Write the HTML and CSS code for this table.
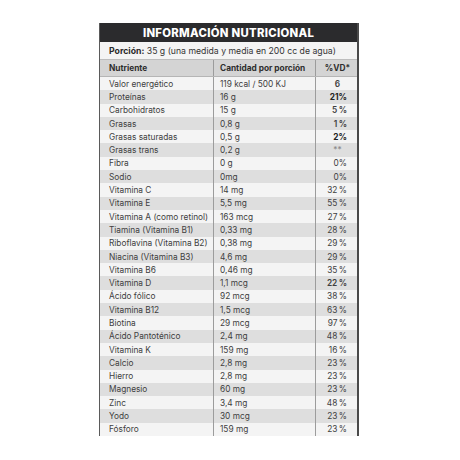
FILE: index.html
```html
<!DOCTYPE html>
<html lang="es">
<head>
<meta charset="utf-8">
<link rel="stylesheet" href="styles.css">
</head>
<body>
<div class="card">
  <div class="title">INFORMACIÓN NUTRICIONAL</div>
  <div class="portion"><span><b>Porción:</b> 35 g (una medida y media en 200 cc de agua)</span></div>
  <div class="row head"><div class="c1">Nutriente</div><div class="c2">Cantidad por porción</div><div class="c3 mid">%VD*</div></div>
  <div class="row"><div class="c1">Valor energético</div><div class="c2">119 kcal / 500 KJ</div><div class="c3 mid semi">6</div></div>
  <div class="row alt"><div class="c1">Proteínas</div><div class="c2">16 g</div><div class="c3 bold">21%</div></div>
  <div class="row"><div class="c1">Carbohidratos</div><div class="c2">15 g</div><div class="c3 semi">5&thinsp;%</div></div>
  <div class="row alt"><div class="c1">Grasas</div><div class="c2">0,8 g</div><div class="c3 semi">1&thinsp;%</div></div>
  <div class="row"><div class="c1">Grasas saturadas</div><div class="c2">0,5 g</div><div class="c3 bold">2%</div></div>
  <div class="row alt"><div class="c1">Grasas trans</div><div class="c2">0,2 g</div><div class="c3 mid faint">**</div></div>
  <div class="row"><div class="c1">Fibra</div><div class="c2">0 g</div><div class="c3">0%</div></div>
  <div class="row alt"><div class="c1">Sodio</div><div class="c2">0mg</div><div class="c3">0%</div></div>
  <div class="row"><div class="c1">Vitamina C</div><div class="c2">14 mg</div><div class="c3">32&thinsp;%</div></div>
  <div class="row alt"><div class="c1">Vitamina E</div><div class="c2">5,5 mg</div><div class="c3">55&thinsp;%</div></div>
  <div class="row"><div class="c1">Vitamina A (como retinol)</div><div class="c2">163 mcg</div><div class="c3">27&thinsp;%</div></div>
  <div class="row alt"><div class="c1">Tiamina (Vitamina B1)</div><div class="c2">0,33 mg</div><div class="c3">28&thinsp;%</div></div>
  <div class="row"><div class="c1">Riboflavina (Vitamina B2)</div><div class="c2">0,38 mg</div><div class="c3">29&thinsp;%</div></div>
  <div class="row alt"><div class="c1">Niacina (Vitamina B3)</div><div class="c2">4,6 mg</div><div class="c3">29&thinsp;%</div></div>
  <div class="row"><div class="c1">Vitamina B6</div><div class="c2">0,46 mg</div><div class="c3">35&thinsp;%</div></div>
  <div class="row alt"><div class="c1">Vitamina D</div><div class="c2">1,1 mcg</div><div class="c3 semi">22&thinsp;%</div></div>
  <div class="row"><div class="c1">Ácido fólico</div><div class="c2">92 mcg</div><div class="c3">38&thinsp;%</div></div>
  <div class="row alt"><div class="c1">Vitamina B12</div><div class="c2">1,5 mcg</div><div class="c3">63&thinsp;%</div></div>
  <div class="row"><div class="c1">Biotina</div><div class="c2">29 mcg</div><div class="c3">97&thinsp;%</div></div>
  <div class="row alt"><div class="c1">Ácido Pantoténico</div><div class="c2">2,4 mg</div><div class="c3">48&thinsp;%</div></div>
  <div class="row"><div class="c1">Vitamina K</div><div class="c2">159 mg</div><div class="c3">16&thinsp;%</div></div>
  <div class="row alt"><div class="c1">Calcio</div><div class="c2">2,8 mg</div><div class="c3">23&thinsp;%</div></div>
  <div class="row"><div class="c1">Hierro</div><div class="c2">2,8 mg</div><div class="c3">23&thinsp;%</div></div>
  <div class="row alt"><div class="c1">Magnesio</div><div class="c2">60 mg</div><div class="c3">23&thinsp;%</div></div>
  <div class="row"><div class="c1">Zinc</div><div class="c2">3,4 mg</div><div class="c3">48&thinsp;%</div></div>
  <div class="row alt"><div class="c1">Yodo</div><div class="c2">30 mcg</div><div class="c3">23&thinsp;%</div></div>
  <div class="row"><div class="c1">Fósforo</div><div class="c2">159 mg</div><div class="c3">23&thinsp;%</div></div>
</div>
</body>
</html>
```
FILE: styles.css
```css
html, body {
  margin: 0;
  padding: 0;
  background: #ffffff;
}
body {
  padding: 23px 0 0 99px;
  font-family: Inter, "Liberation Sans", sans-serif;
  color: #404040;
}
.card {
  width: 260px;
  box-sizing: border-box;
  border-left: 1.5px solid #5a5a5a;
  border-right: 2px solid #4a4a4a;
  display: flex;
  flex-direction: column;
}
.title {
  height: 19px;
  background: #2b2b2d;
  color: #ffffff;
  font-weight: 800;
  font-size: 11.3px;
  letter-spacing: 0.3px;
  display: flex;
  align-items: center;
  justify-content: center;
}
.portion {
  height: 18px;
  background: #f4f4f4;
  font-size: 8.7px;
  display: flex;
  align-items: center;
  padding-left: 9px;
  color: #333;
  border-bottom: 1px solid #bdbdbd;
  box-sizing: border-box;
  white-space: nowrap;
}
.portion b { font-weight: 700; color: #2a2a2a; }
.row {
  display: grid;
  grid-template-columns: 113px 102px 1fr;
  height: 13.3px;
  background: #f4f4f4;
  font-size: 8.3px;
}
.row.alt { background: #dedede; }
.row.head {
  height: 17px;
  background: #d4d4d4;
  font-weight: 700;
  font-size: 8.3px;
  color: #2e2e2e;
  border-bottom: 1px solid #b5b5b5;
  box-sizing: border-box;
}
.row > div {
  display: flex;
  align-items: center;
  white-space: nowrap;
}
.c1 { padding-left: 9px; }
.c2 {
  padding-left: 6px;
  border-left: 1px solid #9c9c9c;
}
.c3 {
  border-left: 1px solid #9c9c9c;
  justify-content: flex-end;
  padding-right: 10px;
}
.c3.mid { justify-content: center; padding-right: 0; padding-left: 2px; }
.semi { font-weight: 600; }
.bold { font-weight: 700; color: #222; }
.faint { color: #888; }
```
